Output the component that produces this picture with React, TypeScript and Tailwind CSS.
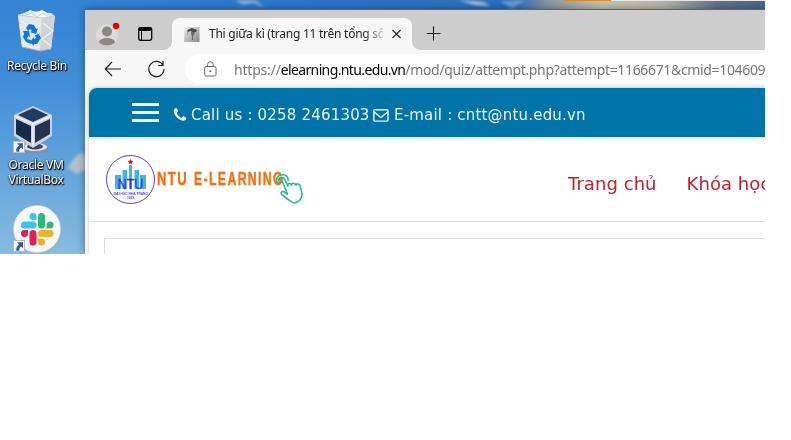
import React from "react";

function ShortcutArrow() {
  return (
    <svg className="absolute bottom-px left-0 h-3 w-3" viewBox="0 0 12 12">
      <rect x=".5" y=".5" width="11" height="11" fill="#f5f5f5" stroke="#b8bcc0" />
      <path d="M4 2.2h6v6L8.2 6.5C6.7 7.5 6 8.8 6.2 10.8H3.4C2.7 7.8 4 5.8 6.1 4.4Z" fill="#2a5c9e" />
    </svg>
  );
}

function RecycleBin() {
  return (
    <svg className="h-11 w-10" viewBox="0 0 40 44">
      <path d="M2 6 13 2l22 2 4 3-4 33-11 2L6 38Z" fill="#dfe3e7" />
      <path d="M2 6 26 9 24 42 6 38Z" fill="#e4e7e9" />
      <path d="m26 9 13-2-4 33-11 2Z" fill="#ced3d7" />
      <path d="m8 6 6-5 6 2 6-2 4 2 3 5-8 2Z" fill="#f7f7f7" />
      <path d="m10 6 7-2 4 4 5-4 6 3M15 2l3 5" fill="none" stroke="#ced3d7" />
      <path d="m27 14 10 8-11 8 9 7M5 12l6 4M12 34l11 5" fill="none" stroke="#f0f2f3" strokeWidth="1.2" />
      <path d="M2 6 26 9 39 7" fill="none" stroke="#bac3cb" strokeWidth=".8" />
      <path d="M6 38l18 4 11-2" fill="none" stroke="#a3aaaf" />
      <path d="m10 19 3-4 5 1 2 4 2-1-2 6-6-2 2-1-2-2-2 2ZM7 22l6 0 1 6-2-1-1 3 4 1v4l-5-2-3-5 1-3ZM19 26l4-1 2 4-4 6-3 0v2l-4-4 4-5v2l2-1Z" fill="#1079d2" />
    </svg>
  );
}

function VirtualBox() {
  return (
    <svg className="h-[48px] w-10" viewBox="0 0 40 48">
      <ellipse cx="22" cy="43" rx="13" ry="4.5" fill="#8490a5" />
      <ellipse cx="22" cy="41" rx="12" ry="4" fill="#dce2ed" />
      <ellipse cx="22" cy="40.5" rx="8" ry="3" fill="#35466b" />
      <path d="m20 0 19 9v21L20 42 1 30V9Z" fill="#ccd2e2" />
      <path d="m20 2 15 7-15 7-15-7Z" fill="#203b5d" />
      <path d="m3 13 15 7v17L3 28Z" fill="#142c4a" />
      <path d="m37 13-15 7v17l15-9Z" fill="#25344e" />
      <path d="m20 18-18-8M20 18l18-8M20 18v22" stroke="#edf0f7" strokeWidth="1.5" />
    </svg>
  );
}

function Slack() {
  return (
    <svg className="h-12 w-12" viewBox="0 0 48 48">
      <circle cx="24" cy="24" r="23.5" fill="#f9f9f9" stroke="#d0d7dd" strokeWidth=".7" />
      <g strokeWidth="7" strokeLinecap="round" fill="none">
        <path d="M11.5 20h8.5" stroke="#36c5f0" />
        <path d="M28.5 11.5V20" stroke="#2eb67d" />
        <path d="M28.5 28.5H37" stroke="#ecb22e" />
        <path d="M20 28.5V37" stroke="#e01e5a" />
      </g>
      <path d="M23.5 15H20a3.5 3.5 0 1 1 3.5-3.5Z" fill="#36c5f0" />
      <path d="M33.5 23.5V20a3.5 3.5 0 1 1 3.5 3.5Z" fill="#2eb67d" />
      <path d="M25 33.5h3.5A3.5 3.5 0 1 1 25 37Z" fill="#ecb22e" />
      <path d="M15 25v3.5a3.5 3.5 0 1 1-3.5-3.5Z" fill="#e01e5a" />
    </svg>
  );
}

function Wallpaper() {
  return (
    <svg className="absolute inset-0 h-full w-full" viewBox="0 0 765 254" preserveAspectRatio="none">
      <defs>
        <linearGradient id="sky" x2="0" y2="1">
          <stop stopColor="#3482d2" />
          <stop offset=".35" stopColor="#438fd9" />
          <stop offset=".65" stopColor="#62a3db" />
          <stop offset="1" stopColor="#88bbdf" />
        </linearGradient>
        <linearGradient id="top">
          <stop stopColor="#3485d6" />
          <stop offset=".35" stopColor="#2d74ca" />
          <stop offset=".55" stopColor="#2f72bd" />
          <stop offset=".63" stopColor="#246dc1" />
          <stop offset=".68" stopColor="#8795a3" />
          <stop offset=".76" stopColor="#c8c5b4" />
          <stop offset=".85" stopColor="#b8b8ac" />
          <stop offset=".93" stopColor="#60738a" />
          <stop offset="1" stopColor="#4c688e" />
        </linearGradient>
        <filter id="cloud"><feGaussianBlur stdDeviation="1.5" /></filter>
      </defs>
      <path fill="url(#sky)" d="M0 0h765v254H0z" />
      <path fill="url(#top)" d="M85 0h680v10H85z" />
      <g filter="url(#cloud)" fill="#b7cadf">
        <path d="m235 0 8 5 10-2 12 5-9-8Z" opacity=".65" />
        <path d="m67 168 8-11 7-5 4 5v12l-8 5Z" fill="#c5c8c7" opacity=".8" />
        <path d="m458 0 25 2 8 4-16-1Z" />
        <path d="m500 1 12 8 13-9Z" opacity=".5" />
      </g>
      <path fill="#e7e7e5" d="M563 0h202v1H563z" />
      <path fill="#dc8d2d" d="M563 0h48v1h-48z" />
    </svg>
  );
}

function DesktopItem({ className, label, children }: { className: string; label?: React.ReactNode; children: React.ReactNode }) {
  return (
    <div className={`absolute flex flex-col items-center ${className}`}>
      {children}
      {label && (
        <span className="text-center text-[12px] leading-[15px] tracking-[-0.3px] whitespace-nowrap text-white [text-shadow:1px_1px_1px_#000,0_1px_2px_#000,0_0_2px_#0008]">
          {label}
        </span>
      )}
    </div>
  );
}

function TabBar() {
  return (
    <div className="flex h-10 shrink-0 bg-[#cdcdcd]">
      <div className="flex w-[87px] items-center pl-[10px] pt-2">
        <svg className="h-6 w-7 shrink-0" viewBox="0 0 28 24">
          <circle cx="12" cy="13" r="11" fill="#dcdad7" />
          <circle cx="12" cy="9.5" r="5" fill="#8a8886" />
          <path d="M4 20.5c0-6 16-6 16 0-4 4-12 4-16 0Z" fill="#8a8886" />
          <circle cx="21" cy="4" r="3.2" fill="#e50000" />
        </svg>
        <svg className="ml-[14px] h-4 w-4 shrink-0" viewBox="0 0 16 16">
          <rect x="1.7" y="1.7" width="13" height="12.6" rx="2" fill="none" stroke="#080808" strokeWidth="1.3" />
          <path d="M2 1.5h12.5v3.5H2z" fill="#080808" /><path d="M4.5 5v9" stroke="#080808" />
        </svg>
      </div>
      <div className="relative mt-2 flex h-8 w-[240px] items-center rounded-t-lg bg-[#f7f7f7] pl-3 before:absolute before:bottom-0 before:-left-2 before:h-2 before:w-2 before:bg-[radial-gradient(circle_at_0_0,transparent_7.5px,#f7f7f7_8px)] after:absolute after:-right-2 after:bottom-0 after:h-2 after:w-2 after:bg-[radial-gradient(circle_at_100%_0,transparent_7.5px,#f7f7f7_8px)]">
        <svg className="h-4 w-4 shrink-0" viewBox="0 0 16 16">
          <defs><linearGradient id="fav" x2="1" y2="1"><stop stopColor="#f3f3f3" /><stop offset="1" stopColor="#858585" /></linearGradient></defs>
          <path d="M0 1h15.5v15H0Z" fill="url(#fav)" />
          <path d="m3 4 5-2 5 2-1 2H8L7 5 4 6Z" fill="#494949" />
          <path d="M7 6h4l-1 3-1 1v4H8v-4L7 8Z" fill="#686868" />
          <path d="m4 5-.5 4" stroke="#777" strokeWidth=".7" />
        </svg>
        <span className="ml-[9px] w-[174px] shrink-0 overflow-hidden text-[12px] leading-5 tracking-[-0.25px] whitespace-nowrap text-[#202020] [mask-image:linear-gradient(to_right,black_154px,transparent_180px)]">Thi giữa kì (trang 11 trên tổng số</span>
        <svg className="ml-2 h-3 w-3 shrink-0" viewBox="0 0 12 12"><path d="m1.5 2 8 8m0-8-8 8" stroke="#222" strokeWidth="1.2" /></svg>
      </div>
      <svg className="mt-4 ml-[14px] h-4 w-4" viewBox="0 0 16 16"><path d="M.8 7.5h13.7M7.5.5v14" stroke="#171717" strokeWidth="1.1" /></svg>
    </div>
  );
}

function AddressBar() {
  return (
    <div className="flex h-[38px] shrink-0 items-center bg-[#f7f7f7] pl-[19px]">
      <svg className="h-[18px] w-[18px] shrink-0" viewBox="0 0 18 18"><path d="M8 2 1.3 9 8 16M1.3 9H17" fill="none" stroke="#222" strokeWidth="1.2" /></svg>
      <svg className="ml-[25px] h-[18px] w-[18px] shrink-0" viewBox="0 0 18 18"><path d="M16 5.2A7.6 7.6 0 1 0 17 9M16 .8v4.7h-4.8" fill="none" stroke="#222" strokeWidth="1.2" /></svg>
      <div className="ml-5 flex h-[30px] grow items-center rounded-l-full bg-white pl-[19px]">
        <svg className="h-4 w-[13px] shrink-0" viewBox="0 0 13 16"><rect x=".7" y="5.5" width="11.3" height="9.5" rx="1.5" fill="none" stroke="#686868" /><path d="M3.5 5.5V3.7a2.9 2.9 0 0 1 5.8 0v1.8" fill="none" stroke="#686868" /><circle cx="6.4" cy="10.2" r=".9" fill="#555" /></svg>
        <span className="ml-[17px] text-[14px] tracking-[-0.34px] whitespace-nowrap text-[#777]"><span className="tracking-[-0.2px]">https://</span><span className="tracking-[-0.62px] text-black">elearning.ntu.edu.vn</span>/mod/quiz/attempt.php?attempt=1166671&amp;cmid=104609</span>
      </div>
    </div>
  );
}

function UniversityLogo() {
  return (
    <svg className="h-[50px] w-[50px] shrink-0" viewBox="0 0 50 50">
      <circle cx="24.5" cy="24.5" r="24" fill="#fff" stroke="#563bea" />
      <path d="m24.5 4 1 1.8 2 .3-1.5 1.5.3 2-1.8-1-1.8 1 .3-2-1.5-1.5 2-.3Z" fill="#d4281e" />
      <path d="M9 20h6v14H9zM16.5 15h4.500v19h-4.500zM23 10h3v24h-3zM28.500 15h4.500v19h-4.500zM34 20h6v14h-6z" fill="#43b4df" />
      <text x="11.5" y="34" textLength="26" lengthAdjust="spacingAndGlyphs" fill="#442cec" stroke="#442cec" strokeWidth=".3" fontFamily="Liberation Sans" fontSize="14">NTU</text>
      <text x="8" y="39.5" textLength="34" lengthAdjust="spacingAndGlyphs" fill="#563bea" fontFamily="Liberation Sans" fontSize="4" fontWeight="700">ĐẠI HỌC NHA TRANG</text>
      <text x="21" y="44" fill="#563bea" fontFamily="Liberation Sans" fontSize="3.2" fontWeight="700">1959</text>
    </svg>
  );
}

function SiteHeader() {
  return (
    <div className="flex h-[49px] shrink-0 items-center rounded-tl-lg bg-[#0073a8] pl-[43px] text-[15px] text-[#edf6fa] shadow-[0_1px_6px_#0002]">
      <div className="flex w-[27px] shrink-0 flex-col gap-[5px]">
        <i className="h-[3px] bg-white" /><i className="h-[3px] bg-white" /><i className="h-[3px] bg-white" />
      </div>
      <div className="ml-[13px] flex items-center whitespace-nowrap pt-[5px] font-['DejaVu_Sans',sans-serif] tracking-[0.19px]">
        <svg className="h-4 w-4" viewBox="0 0 1792 1792"><path fill="#fff" d="M1600 1240q0 27-10 70.5t-21 68.5q-21 50-122 106-94 51-186 51-27 0-53-3.5t-57.5-12.5-47-14.5-55.5-20.5-49-18q-98-35-175-83-127-79-264-216t-216-264q-48-77-83-175-3-9-18-49t-20.5-55.5-14.5-47-12.5-57.5-3.5-53q0-92 51-186 56-101 106-122 25-11 68.5-21t70.5-10q14 0 21 3 18 6 53 76 11 19 30 54t35 63.5 31 53.5q3 4 17.5 25t21.5 35.5 7 28.5q0 20-28.5 50t-62 55-62 53-28.5 46q0 9 5 22.5t8.5 20.5 14 24 11.5 19q76 137 174 235t235 174q2 1 19 11.5t24 14 20.5 8.5 22.5 5q18 0 46-28.5t53-62 55-62 50-28.5q14 0 28.5 7t35.5 21.5 25 17.5q25 15 53.5 31t63.5 35 54 30q70 35 76 53 3 7 3 21z" /></svg>
        <span className="ml-[3px] w-[182px]">Call us : 0258 2461303</span>
        <svg className="h-[13px] w-4" viewBox="0 0 16 13"><rect x=".8" y=".8" width="14.2" height="11.3" rx="1" fill="none" stroke="currentColor" strokeWidth="1.4" /><path d="M1.2 3 6.8 7.6q1.1.8 2.2 0L14.6 3" fill="none" stroke="currentColor" strokeWidth="1.4" /></svg>
        <span className="ml-[5px]">E-mail : cntt@ntu.edu.vn</span>
      </div>
    </div>
  );
}

function BrowserWindow() {
  return (
    <div className="absolute top-[9px] left-[85px] flex h-[245px] w-[680px] flex-col overflow-hidden border-t border-[#626466] bg-[#f7f7f7] shadow-[0_0_8px_#0006]">
      <TabBar />
      <AddressBar />
      <div className="ml-1 flex grow flex-col rounded-tl-lg bg-white shadow-[0_0_3px_#0003]">
        <SiteHeader />
        <div className="flex h-[85px] shrink-0 items-center border-b border-[#dedede] pt-px pl-[17px]">
          <UniversityLogo />
          <svg className="h-[50px] w-[150px] shrink-0" viewBox="0 0 150 50">
            <g fill="#fb6c08" stroke="#fb6c08" strokeWidth=".3" fontFamily="Liberation Sans" fontSize="18.5" fontWeight="700" letterSpacing="2">
              <text x="1" y="29.5" textLength="31" lengthAdjust="spacingAndGlyphs">NTU</text>
              <text x="38" y="29.5" textLength="90" lengthAdjust="spacingAndGlyphs">E-LEARNING</text>
            </g>
            <g transform="translate(118 17.5) scale(1.09)" fill="none" stroke="#24bc86" strokeWidth="1.4" strokeLinecap="round" strokeLinejoin="round">
              <path d="M3 10C.8 5 4 2 8 2c3 0 5 2 5 5M5.5 10C2.8 6 6 3.5 8.5 4.8" />
              <path d="M12.5 20 7.3 7.5c-1-2 1.5-3.2 2.5-1.2l3 6.2c-.3-3 2.5-3 3.3-.8 0-2.5 3.3-2.5 4 0 .5-2 3.5-1.5 4 1l1.6 6c.8 5-3.2 8.5-7 9.3-4.5-1.3-7.5-5-11.7-7.8-1.5-1.8.2-3.5 2.5-2.3l3 2.1" />
            </g>
          </svg>
          <nav className="ml-[262px] flex gap-[30px] pt-[7px] font-['DejaVu_Sans',sans-serif] text-[18px] tracking-[0.06px] whitespace-nowrap text-[#c32127]">
            <span>Trang chủ</span><span>Khóa học</span>
          </nav>
        </div>
        <div className="mt-4 ml-[15px] grow border-t border-l border-[#dedede]" />
      </div>
    </div>
  );
}

export default function App() {
  return (
    <main className="h-[440px] w-[791px] overflow-hidden bg-white font-['Noto_Sans',sans-serif]">
      <div className="relative h-[254px] w-[765px] overflow-hidden">
        <Wallpaper />
        <DesktopItem className="top-[9px] left-[7px] w-[60px] gap-[5px]" label="Recycle Bin"><div className="ml-[-2px]"><RecycleBin /></div></DesktopItem>
        <DesktopItem className="top-[106px] left-[7px] w-[58px] gap-[3px]" label={<>Oracle VM<br />VirtualBox</>}><div className="relative w-[46px]"><VirtualBox /><ShortcutArrow /></div></DesktopItem>
        <DesktopItem className="top-[205px] left-[13px]"><div className="relative"><Slack /><ShortcutArrow /></div></DesktopItem>
        <BrowserWindow />
      </div>
    </main>
  );
}
